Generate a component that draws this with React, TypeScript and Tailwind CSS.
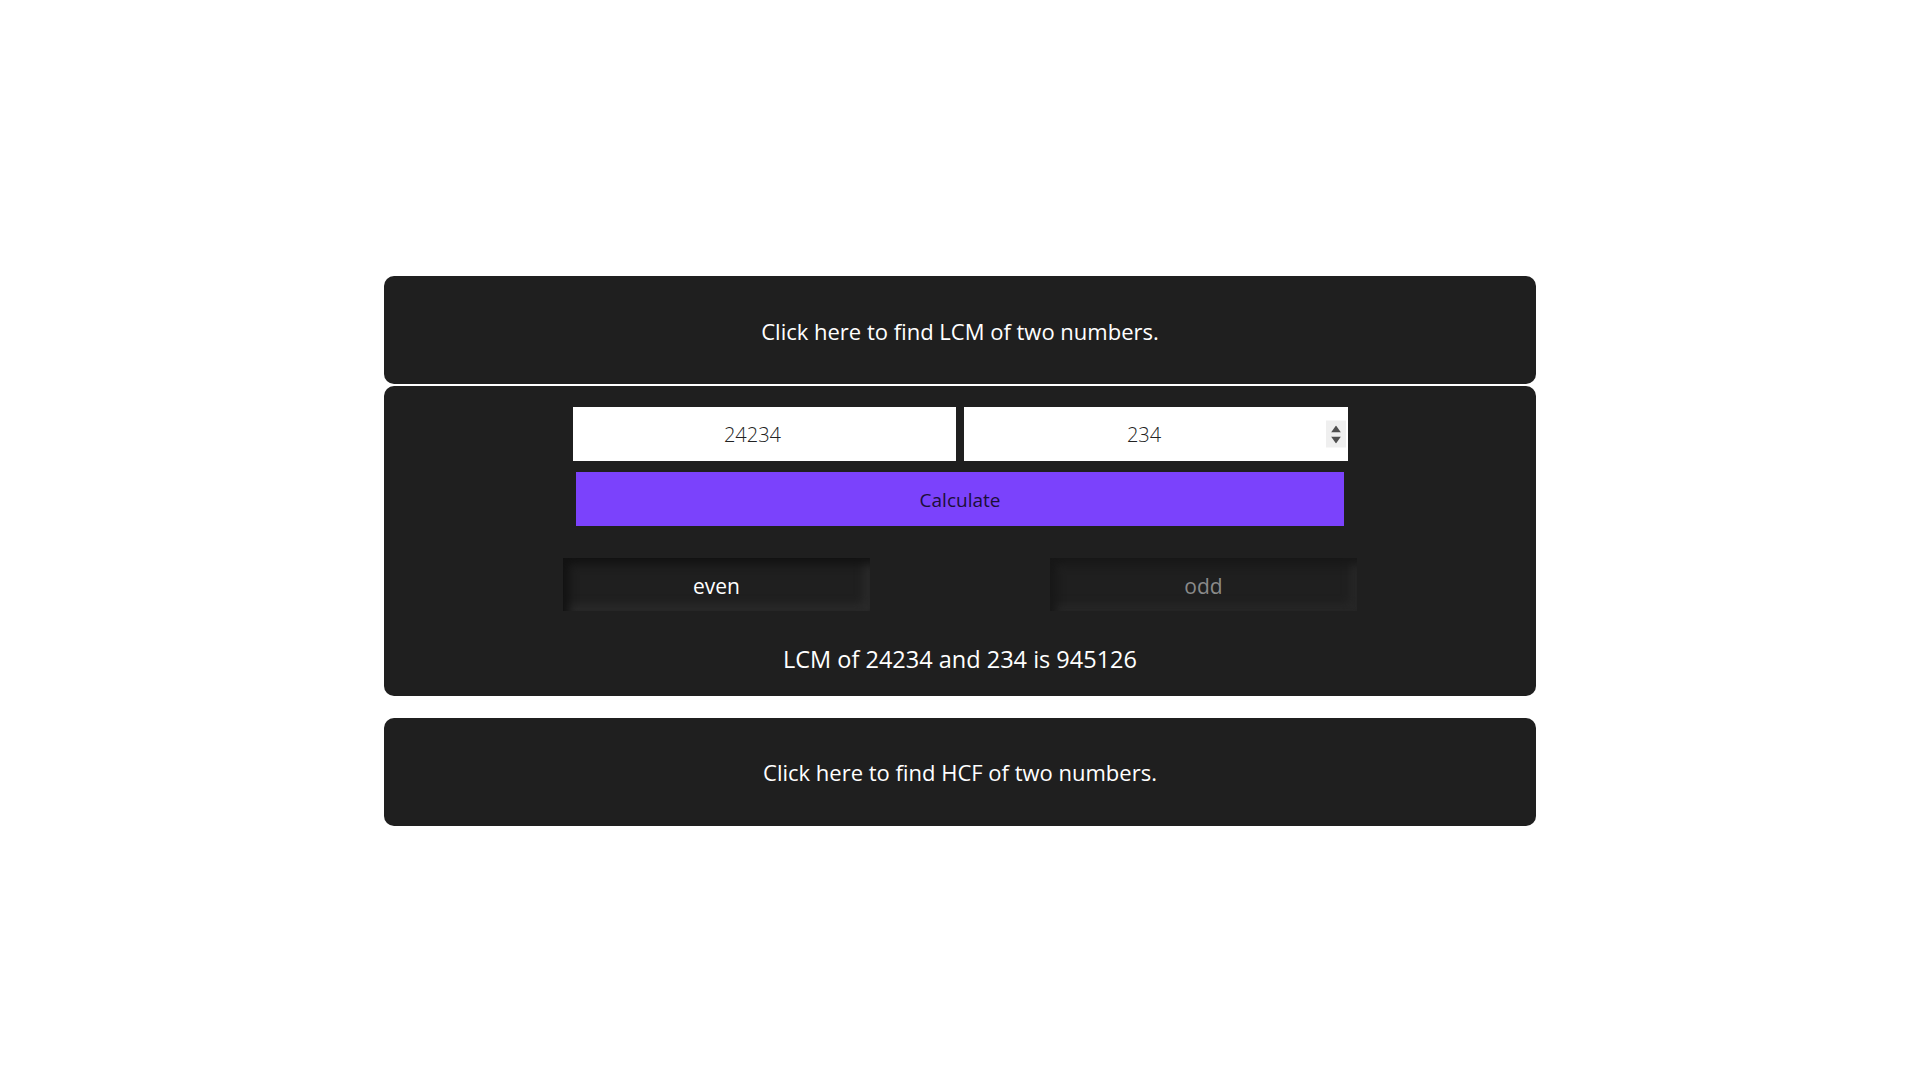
import { useState } from 'react';

const FONT = { fontFamily: '"Open Sans", "Noto Sans", sans-serif' };

function Spinner() {
  return (
    <div className="absolute right-[2px] top-1/2 -translate-y-1/2 w-[20px] h-[27px] bg-[#efefef] flex flex-col items-center justify-center gap-[4px]">
      <svg width="10" height="7" viewBox="0 0 10 7"><path d="M5 0 L10 7 L0 7 Z" fill="#505050" /></svg>
      <svg width="10" height="7" viewBox="0 0 10 7"><path d="M0 0 L10 0 L5 7 Z" fill="#505050" /></svg>
    </div>
  );
}

export default function App() {
  const [a, setA] = useState('24234');
  const [b, setB] = useState('234');

  return (
    <div className="min-h-screen bg-white pt-[276px]" style={FONT}>
      <div className="w-[1152px] mx-auto">
        {/* LCM header */}
        <div className="h-[108px] pt-[2px] bg-[#1f1f1f] rounded-[10px] flex items-center justify-center text-white text-[22px] mb-[2px]">
          Click here to find LCM of two numbers.
        </div>

        {/* LCM panel */}
        <div className="bg-[#1f1f1f] rounded-[10px] pt-[21px] pb-[22px] flex flex-col items-center">
          <div className="flex gap-[8px]">
            <input
              value={a}
              onChange={e => setA(e.target.value)}
              className="w-[383px] h-[54px] pr-[23px] bg-white text-center text-[20px] text-[#222] font-light outline-none"
              style={FONT}
            />
            <div className="relative">
              <input
                value={b}
                onChange={e => setB(e.target.value)}
                className="w-[384px] h-[54px] pr-[23px] bg-white text-center text-[20px] text-[#222] font-light outline-none"
                style={FONT}
              />
              <Spinner />
            </div>
          </div>
          <button className="mt-[11px] w-[768px] h-[54px] pt-[2px] bg-[#7b42fc] text-[19px] text-[#1c0f38]" style={FONT}>
            Calculate
          </button>

          <div className="mt-[32px] w-[794px] flex justify-between">
            <button className="w-[307px] h-[53px] pt-[4px] bg-[#1f1f1f] text-white text-[21px] shadow-[inset_6px_6px_10px_#121212,inset_-6px_-6px_10px_#2c2c2c]" style={FONT}>
              even
            </button>
            <button className="w-[307px] h-[53px] pt-[4px] bg-[#1f1f1f] text-[#8a8a8a] text-[21px] shadow-[inset_6px_6px_10px_#171717,inset_-6px_-6px_10px_#282828]" style={FONT}>
              odd
            </button>
          </div>

          <p className="mt-[33px] text-white text-[23.5px] leading-[30px]">LCM of 24234 and 234 is 945126</p>
        </div>

        {/* HCF header */}
        <div className="mt-[22px] h-[108px] bg-[#1f1f1f] rounded-[10px] flex items-center justify-center text-white text-[22px]">
          Click here to find HCF of two numbers.
        </div>
      </div>
    </div>
  );
}
